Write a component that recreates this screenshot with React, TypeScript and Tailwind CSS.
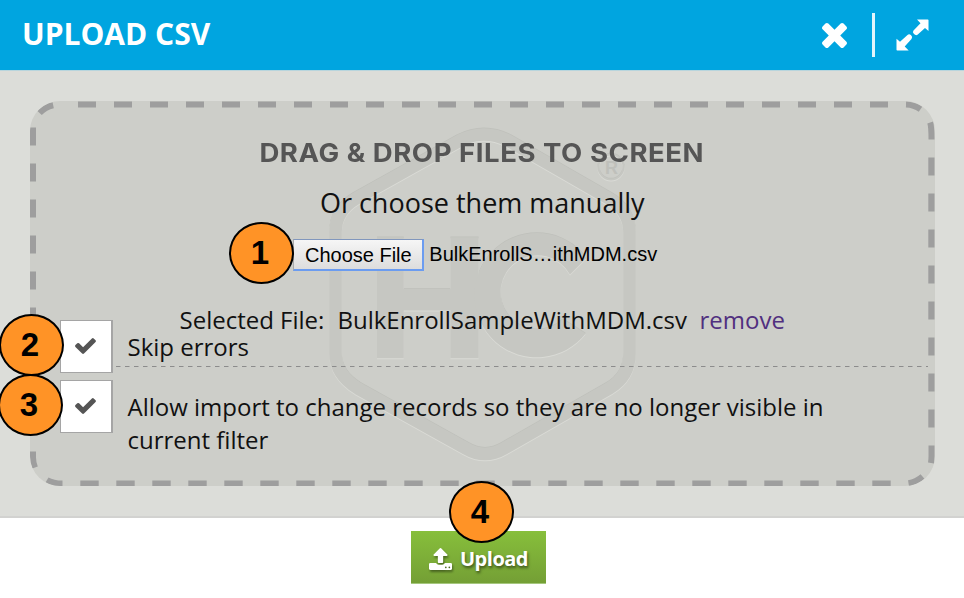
import React from "react";

const range = (start: number, end: number, step: number) =>
  Array.from({ length: Math.floor((end - start) / step) + 1 }, (_, i) => start + i * step);

function Badge({ n, className }: { n: number; className: string }) {
  return (
    <div
      className={`absolute z-20 flex h-[62px] w-[65px] items-center justify-center rounded-[50%] border-2 border-black bg-[#ff9326] pr-[3px] pb-[2px] font-['Liberation_Sans',sans-serif] text-[33px] leading-none font-bold text-black ${className}`}
    >
      {n}
    </div>
  );
}

function CheckBox() {
  return (
    <div className="flex h-[53px] w-[53px] shrink-0 items-center justify-center border border-r-2 border-[#a5a5a5] bg-white pr-px">
      <svg className="h-4 w-[21px]" viewBox="121 334 1550 1188" fill="#555">
        <path d="M1671 566q0 40-28 68l-724 724-136 136q-28 28-68 28t-68-28l-136-136-362-362q-28-28-28-68t28-68l136-136q28-28 68-28t68 28l294 295 656-657q28-28 68-28t68 28l136 136q28 28 28 68z" />
      </svg>
    </div>
  );
}

/* Engraved brand mark; drawn three times for shadow, highlight and face. */
function Emblem({ color, dy }: { color: string; dy: number }) {
  return (
    <g transform={`translate(0 ${dy})`} fill={color} stroke="none">
      <path
        fill="none"
        stroke={color}
        strokeWidth="12.6"
        d="M335.5 232Q335.5 210 356 198L460 140Q484 128 508 140L609 198Q629.5 210 629.5 232V353Q629.5 376 609 388L504 448Q485 459 466 448L358 388Q335.5 374 335.5 353Z"
      />
      <path d="M377 236.700h26.700v51.600h46.800v-51.600h28v121h-28v-47.700h-46.800v47.700h-26.700z" />
      <path d="M582 262L570 274A37 37 0 1 0 563 318.500L585.700 333A62.200 62.200 0 1 1 582 252Z" fill="none" />
      <path d="M582 252A62.200 62.200 0 1 0 585.700 333L563 318.500A37 37 0 1 1 570 274L586 258Z" />
      <circle cx="611" cy="166.500" r="12.500" fill="none" stroke={color} strokeWidth="2" />
    </g>
  );
}

function DropZoneArt() {
  return (
    <svg className="absolute inset-0 h-full w-full" viewBox="30 100.500 904.500 385.500" preserveAspectRatio="none">
      <Emblem color="#bfc0bb" dy={-0.7} />
      <Emblem color="#dadbd6" dy={1} />
      <Emblem color="#c6c7c2" dy={0} />
      <text x="611.500" y="173.500" textAnchor="middle" fontFamily="Liberation Sans, sans-serif" fontWeight="700" fontSize="18" fill="#bfc0bb">
        R
      </text>
      <g fill="#9e9e9e">
        {range(78, 870, 36).map((x) => (
          <rect key={x} x={x} y={101} width={18} height={6} />
        ))}
        {range(80.3, 873, 36).map((x) => (
          <rect key={x} x={x} y={480} width={18.4} height={6} />
        ))}
        {range(127, 415, 36).map((y) => (
          <rect key={y} x={30} y={y} width={6} height={18} />
        ))}
        {range(157, 409, 36).map((y) => (
          <rect key={y} x={928.3} y={y} width={6.2} height={18} />
        ))}
      </g>
      <g fill="none" stroke="#9e9e9e" strokeWidth="6">
        <path d="M39.600 112.600Q45 106.500 53.200 104.700" />
        <path d="M906 104Q914 104.200 920.500 108.800" />
        <path d="M930.200 122Q931.500 126 931.500 139" />
        <path d="M33 451V457Q33 462 35 467" />
        <path d="M47 479.500Q53 483 62.500 483" />
        <path d="M908.500 482.700Q916 481.500 922.500 476" />
        <path d="M931.500 445V456Q931.500 459 931 462.500" />
      </g>
    </svg>
  );
}

export default function App() {
  return (
    <div className="relative flex h-[598px] w-[964px] flex-col overflow-hidden bg-white font-['Open_Sans',sans-serif] text-[#111]">
      <header className="flex h-[70px] shrink-0 items-center justify-between bg-[#00a5e0] pr-[35px] pl-[22px] text-white">
        <h1 className="pb-[2px] text-[30px] leading-[66px] font-bold">UPLOAD CSV</h1>
        <div className="flex items-center">
          <svg className="mr-[25px] h-[25px] w-[25px]" viewBox="302 366 1188 1188" fill="white">
            <path d="M1490 1322q0 40-28 68l-136 136q-28 28-68 28t-68-28l-294-294-294 294q-28 28-68 28t-68-28l-136-136q-28-28-28-68t28-68l294-294-294-294q-28-28-28-68t28-68l136-136q28-28 68-28t68 28l294 294 294-294q28-28 68-28t68 28l136 136q28 28 28 68t-28 68l-294 294 294 294q28 28 28 68z" />
          </svg>
          <div className="mr-[21px] h-11 w-[3px] bg-[#e2f4fb]" />
          <svg className="mb-[1px] h-8 w-[33px]" viewBox="895.500 18.500 33 32" fill="white">
            <path d="M916.500 19H927.300Q928 19 928 19.700V30.500L924.500 27.400L917 34.300Q915.300 35.500 913.500 33.600Q911.500 31.700 913 30L920 22.800ZM896 38.200L899.500 41.200L907 34.500Q908.700 33 910.600 34.800Q912.500 36.700 911 38.400L904.200 46L908.200 50H896.700Q896 50 896 49.300Z" />
          </svg>
        </div>
      </header>

      <main className="h-[448px] shrink-0 border-t border-b-2 border-t-[#b8d5dd] border-b-[#d2d2d0] bg-[#dcddd9] pt-[29.5px] pl-[30px]">
        <section className="relative flex h-[385.5px] w-[904.5px] flex-col overflow-hidden rounded-[30px] bg-[#cdcec9]">
          <DropZoneArt />
          <div className="relative flex flex-col items-center">
            <h2 className="mt-[32px] scale-x-[1.06] font-[Inter,sans-serif] text-[26px] leading-10 font-bold tracking-[0.5px] whitespace-nowrap text-[#555]">
              DRAG &amp; DROP FILES TO SCREEN
            </h2>
            <p className="mt-[10px] text-[27px] leading-10 whitespace-nowrap">Or choose them manually</p>
            <div className="mt-[16px] flex h-8 items-center pr-[14px] font-['Liberation_Sans',sans-serif] text-[20px] text-black">
              <button className="h-8 w-[131px] border border-r-2 border-b-2 border-[#6b9cf0] border-t-[#8197bd] border-l-[#aaa] bg-linear-to-b from-[#f6f6f6] to-[#dddddd] pb-[3px] whitespace-nowrap">
                Choose File
              </button>
              <span className="ml-[5px] pb-[2px] whitespace-nowrap">BulkEnrollS…ithMDM.csv</span>
            </div>
          </div>
          <div className="relative mt-[33px] flex h-8 items-center pl-[149.5px] text-[24px] whitespace-nowrap">
            <span>Selected File:</span>
            <span className="ml-[13px]">BulkEnrollSampleWithMDM.csv</span>
            <a className="ml-[12.5px] text-[#51307f]">remove</a>
          </div>
          <div className="relative -mt-[16px] flex h-[53px] pl-[30px] text-[24px]">
            <CheckBox />
            <div className="relative ml-[3px] flex-1">
              <span className="block pl-[11.5px] leading-[54px]">Skip errors</span>
              <svg className="absolute top-[46px] left-0 h-[1px] w-[812px]">
                <line x1="0" y1=".5" x2="812" y2=".5" stroke="#8c8c8c" strokeDasharray="4.500 4.500" />
              </svg>
            </div>
          </div>
          <div className="relative mt-[7px] flex pl-[30px] text-[24px]">
            <CheckBox />
            <p className="mt-[10px] ml-[14.5px] leading-[33px] whitespace-nowrap">
              Allow import to change records so they are no longer visible in
              <br />
              current filter
            </p>
          </div>
        </section>
      </main>

      <footer className="flex justify-center pt-[13px] pr-[7px]">
        <button className="flex h-[53px] w-[135px] items-center justify-center border-b border-[#a5c77d] bg-linear-to-b from-[#87bf3b] to-[#749f35] pt-[3px] text-[20px] font-bold tracking-[-0.5px] text-white [text-shadow:1px_2px_3px_#0008]">
          <svg className="mr-2 h-[22px] w-[23px] drop-shadow-[1px_2px_1px_#0006]" viewBox="64 64 1664 1600" preserveAspectRatio="none" fill="white">
            <path d="M1344 1472q0-26-19-45t-45-19-45 19-19 45 19 45 45 19 45-19 19-45zm256 0q0-26-19-45t-45-19-45 19-19 45 19 45 45 19 45-19 19-45zm128-224v320q0 40-28 68t-68 28h-1472q-40 0-68-28t-28-68v-320q0-40 28-68t68-28h427q21 56 70.500 92t110.500 36h256q61 0 110.500-36t70.500-92h427q40 0 68 28t28 68zm-325-648q-17 40-59 40h-256v448q0 26-19 45t-45 19h-256q-26 0-45-19t-19-45v-448h-256q-42 0-59-40-17-39 14-69l448-448q18-19 45-19t45 19l448 448q31 30 14 69z" />
          </svg>
          Upload
        </button>
      </footer>

      <Badge n={1} className="top-[222px] left-[229px]" />
      <Badge n={2} className="top-[314px] left-[-1px]" />
      <Badge n={3} className="top-[374px] left-[-2px]" />
      <Badge n={4} className="top-[481px] left-[449px]" />
    </div>
  );
}
